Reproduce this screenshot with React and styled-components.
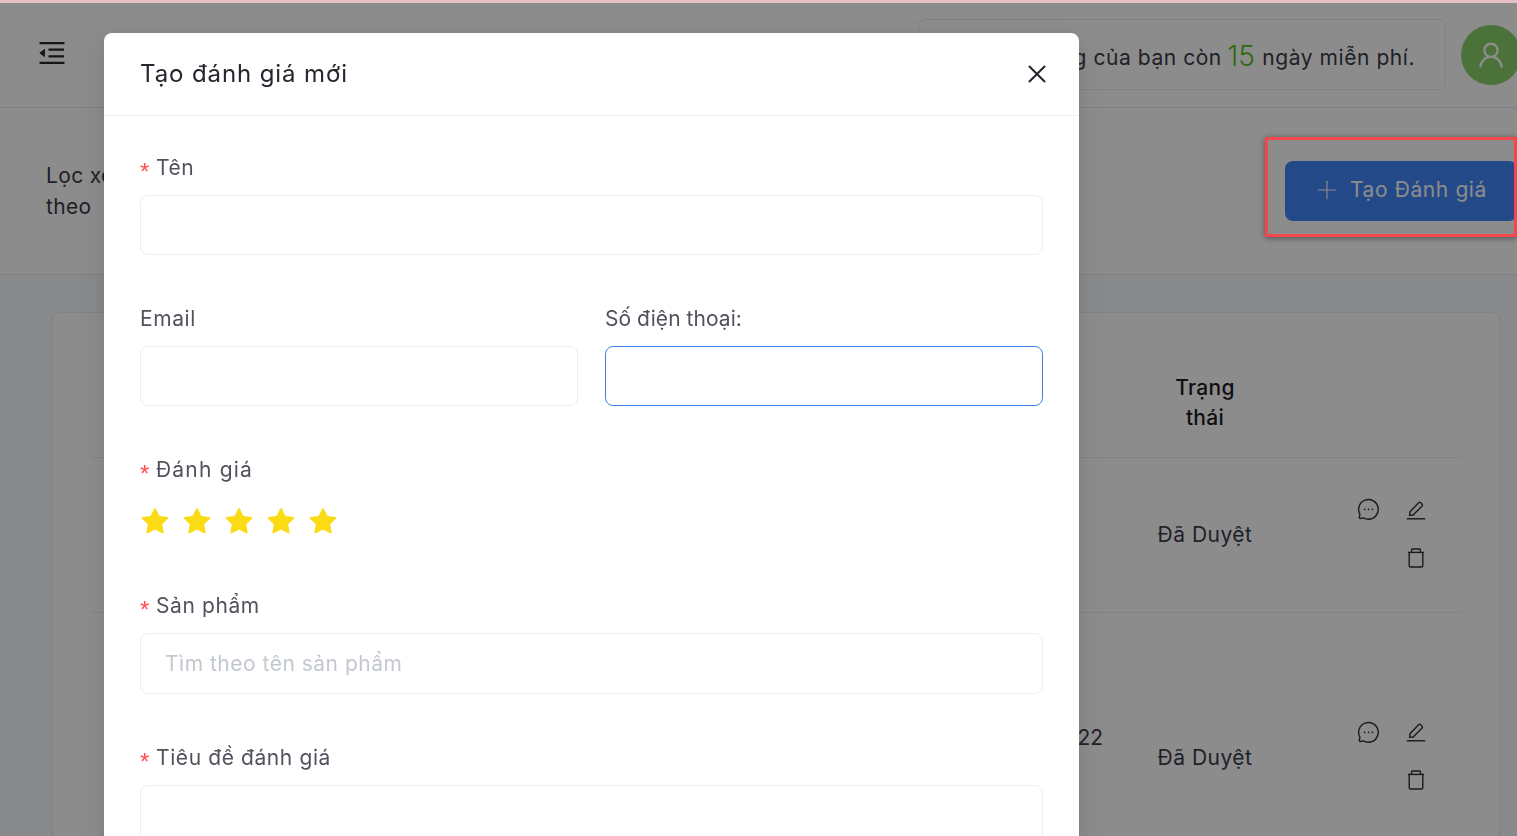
import React from 'react';
import styled, { createGlobalStyle } from 'styled-components';
import { AiOutlineMenuFold, AiOutlineUser, AiOutlineClose, AiFillStar } from 'react-icons/ai';
import { Plus } from 'lucide-react';

const GlobalStyle = createGlobalStyle`
  html, body {
    margin: 0;
    height: 100%;
    overflow: hidden;
    font-family: Inter, "Noto Sans", sans-serif;
  }
  * { box-sizing: border-box; }
`;

const Page = styled.div`
  height: 100vh;
  overflow: hidden;
  background: #f7f9fc;
`;

const Header = styled.header`
  height: 108px;
  background: #fff;
  border-bottom: 1px solid #e6e9ee;
  display: flex;
  align-items: center;
  padding-left: 36px;
  svg.menu { margin-bottom: 2px; }
`;

const Notice = styled.div`
  margin: 2px 0 0 auto;
  width: 528px;
  height: 71px;
  border: 1px solid #e8ebef;
  border-radius: 8px;
  display: flex;
  align-items: center;
  justify-content: flex-end;
  padding: 6px 30px 0 0;
  font-size: 21px;
  letter-spacing: 0.55px;
  color: #3b3b4a;
  white-space: pre;
`;

const Days = styled.span`
  font-size: 28px;
  font-weight: 300;
  letter-spacing: 0;
  color: #52c41a;
  margin: 0 1px 4px -1px;
`;

const Avatar = styled.div`
  flex: none;
  width: 60px;
  height: 60px;
  margin: 2px -4px 0 15px;
  border-radius: 50%;
  background: #87d068;
  color: #fff;
  display: flex;
  align-items: center;
  justify-content: center;
`;

const FilterBar = styled.section`
  height: 167px;
  background: #fff;
  border-bottom: 1px solid #e6e9ee;
  display: flex;
  align-items: center;
  justify-content: space-between;
  padding-left: 46px;
`;

const FilterLabel = styled.div`
  width: 90px;
  font-size: 21px;
  line-height: 31px;
  letter-spacing: 0.35px;
  color: #3b3b4a;
`;

const CreateButton = styled.button`
  flex: none;
  width: 232px;
  height: 60px;
  border: none;
  border-radius: 8px;
  background: #4285fa;
  color: #fff;
  font: inherit;
  font-size: 21px;
  letter-spacing: 0.6px;
  display: flex;
  align-items: center;
  gap: 8px;
  padding: 0 0 3px 27px;
`;

const Content = styled.main`
  padding: 37px 17px 0 52px;
`;

const Card = styled.div`
  background: #fff;
  border: 1px solid #e8ebef;
  border-radius: 8px;
  padding: 0 36px 0 37px;
  height: 700px;
`;

const Row = styled.div`
  display: grid;
  grid-template-columns: 1fr 172px 172px;
  min-height: ${props => props.$height}px;
  align-items: ${props => (props.$head ? 'end' : 'center')};
  border-bottom: 1px solid #eceff3;
  padding-bottom: ${props => (props.$head ? 24 : 0)}px;
`;

const HeadCell = styled.div`
  grid-column: 2;
  justify-self: center;
  width: 80px;
  text-align: center;
  font-size: 21px;
  font-weight: 500;
  line-height: 30px;
  letter-spacing: 0.3px;
  color: #1c1c24;
`;

const DateCell = styled.div`
  grid-column: 1;
  text-align: right;
  padding: 0 16px 40px 0;
  font-size: 21px;
  color: #3b3b4a;
`;

const StatusCell = styled.div`
  grid-column: 2;
  text-align: center;
  padding-bottom: ${props => props.$lift || 0}px;
  font-size: 21px;
  letter-spacing: 0.5px;
  color: #3b3b4a;
`;

const Actions = styled.div`
  grid-column: 3;
  justify-self: end;
  width: 96px;
  margin: 0 23px 3px 0;
  display: flex;
  flex-wrap: wrap;
  justify-content: flex-end;
  color: #2f2f38;
`;

const ActionIcon = styled.span`
  width: 48px;
  height: 48px;
  display: flex;
  align-items: center;
  justify-content: center;
`;

const Overlay = styled.div`
  position: fixed;
  inset: 0;
  background: rgba(0, 0, 0, 0.45);
  overflow: hidden;
`;

const Modal = styled.div`
  width: 975px;
  margin: 33px 0 0 104px;
  background: #fff;
  border-radius: 8px;
  box-shadow: 0 6px 16px rgba(0, 0, 0, 0.08), 0 3px 6px -4px rgba(0, 0, 0, 0.12), 0 9px 28px 8px rgba(0, 0, 0, 0.05);
`;

const ModalHeader = styled.div`
  height: 83px;
  border-bottom: 1px solid #edf0f4;
  display: flex;
  align-items: center;
  justify-content: space-between;
  padding: 0 29px 0 36px;
`;

const ModalTitle = styled.h2`
  margin: 0 0 2px;
  font-size: 24px;
  font-weight: 400;
  letter-spacing: 0.9px;
  color: #26262e;
`;

const CloseButton = styled.button`
  border: none;
  background: none;
  padding: 0;
  display: flex;
  color: #26262e;
`;

const ModalBody = styled.form`
  padding: 37px 36px 0;
`;

const FieldRow = styled.div`
  display: grid;
  grid-template-columns: 1fr 1fr;
  gap: 27px;
`;

const Field = styled.div`
  margin-bottom: 49px;
`;

const Label = styled.label`
  display: flex;
  height: 28px;
  margin-bottom: 14px;
  font-size: 21px;
  line-height: 30px;
  letter-spacing: ${props => props.$spacing ?? 0.6}px;
  color: #52525e;
  &::before {
    content: ${props => (props.$required ? '"*"' : 'none')};
    width: 16px;
    color: #ff4d4f;
    font-family: "Liberation Sans", sans-serif;
    font-size: 24px;
    line-height: 38px;
    letter-spacing: 0;
  }
`;

const Input = styled.input`
  display: block;
  width: 100%;
  height: ${props => props.$height || 60}px;
  border: 1px solid ${props => (props.$focused ? '#3f83e8' : '#ebeff5')};
  border-radius: 8px;
  padding: 0 24px;
  font: inherit;
  font-size: 21px;
  letter-spacing: 0.5px;
  color: #26262e;
  outline: none;
  &::placeholder {
    color: #c3c8d0;
  }
`;

const Stars = styled.div`
  height: 45px;
  display: flex;
  gap: 10px;
  margin-left: -1px;
  color: #fadb14;
  padding-top: 9px;
`;

const Highlight = styled.div`
  position: fixed;
  left: 1265px;
  top: 137px;
  width: 252px;
  height: 100px;
  border: 3px solid #f5474b;
  box-shadow: 0 1px 6px rgba(0, 0, 0, 0.45);
`;

const TopStrip = styled.div`
  position: fixed;
  inset: 0 0 auto 0;
  height: 3px;
  background: #e5c0c6;
`;

const CommentIcon = () => (
  <svg width="23" height="23" viewBox="0 0 23 23" fill="none" stroke="currentColor" strokeWidth="1.4" strokeLinecap="round" strokeLinejoin="round">
    <path d="M11.5 21.2a9.8 9.8 0 1 0-8.6-5l-.6 3.4a.8.8 0 0 0 1 .9l3.2-.6a9.8 9.8 0 0 0 5 1.3Z" />
    <path d="M7.6 11.4h.1M11.5 11.4h.1M15.4 11.4h.1" strokeWidth="1.6" />
  </svg>
);

const EditIcon = () => (
  <svg width="20" height="20" viewBox="0 0 20 20" fill="none" stroke="currentColor" strokeWidth="1.4" strokeLinejoin="round">
    <path d="M.8 18.8h18.4" />
    <path d="M3.6 15.4 4 11.8 12.8 2.6a1.2 1.2 0 0 1 1.7 0l1.6 1.6a1.2 1.2 0 0 1 0 1.7L7.2 15Z" />
  </svg>
);

const TrashIcon = () => (
  <svg width="18" height="20" viewBox="0 0 18 20" fill="none" stroke="currentColor" strokeWidth="1.4" strokeLinejoin="round">
    <path d="M.8 4.4h16.4" />
    <path d="M4.6 4.4V1.8c0-.5.3-.8.8-.8h7.2c.5 0 .8.3.8.8v2.6" />
    <path d="M2.2 4.4v13.4c0 .7.5 1.2 1.2 1.2h11.2c.7 0 1.2-.5 1.2-1.2V4.4" />
  </svg>
);

const RowActions = () => (
  <Actions>
    <ActionIcon><CommentIcon /></ActionIcon>
    <ActionIcon><EditIcon /></ActionIcon>
    <ActionIcon><TrashIcon /></ActionIcon>
  </Actions>
);

const App = () => (
  <>
    <GlobalStyle />
    <Page>
      <Header>
        <AiOutlineMenuFold className="menu" size={32} color="#26262e" />
        <Notice>
          Thời gian sử dụng của bạn còn <Days>15</Days> ngày miễn phí.
        </Notice>
        <Avatar><AiOutlineUser size={32} /></Avatar>
      </Header>
      <FilterBar>
        <FilterLabel>Lọc xem theo</FilterLabel>
        <CreateButton type="button">
          <Plus size={30} strokeWidth={0.9} />
          Tạo Đánh giá
        </CreateButton>
      </FilterBar>
      <Content>
        <Card>
          <Row $head $height={145}>
            <HeadCell>Trạng thái</HeadCell>
          </Row>
          <Row $height={155}>
            <StatusCell $lift={2}>Đã Duyệt</StatusCell>
            <RowActions />
          </Row>
          <Row $height={290}>
            <DateCell>12/10/2022</DateCell>
            <StatusCell>Đã Duyệt</StatusCell>
            <RowActions />
          </Row>
        </Card>
      </Content>
    </Page>
    <Overlay>
      <Modal>
        <ModalHeader>
          <ModalTitle>Tạo đánh giá mới</ModalTitle>
          <CloseButton type="button"><AiOutlineClose size={26} /></CloseButton>
        </ModalHeader>
        <ModalBody>
          <Field>
            <Label $required>Tên</Label>
            <Input />
          </Field>
          <FieldRow>
            <Field>
              <Label>Email</Label>
              <Input />
            </Field>
            <Field>
              <Label $spacing={0.05}>Số điện thoại:</Label>
              <Input $focused />
            </Field>
          </FieldRow>
          <Field>
            <Label $required $spacing={1.2}>Đánh giá</Label>
            <Stars>
              {[1, 2, 3, 4, 5].map(n => <AiFillStar key={n} size={32} />)}
            </Stars>
          </Field>
          <Field>
            <Label $required>Sản phẩm</Label>
            <Input $height={61} placeholder="Tìm theo tên sản phẩm" />
          </Field>
          <Field>
            <Label $required>Tiêu đề đánh giá</Label>
            <Input />
          </Field>
        </ModalBody>
      </Modal>
    </Overlay>
    <Highlight />
    <TopStrip />
  </>
);

export default App;
